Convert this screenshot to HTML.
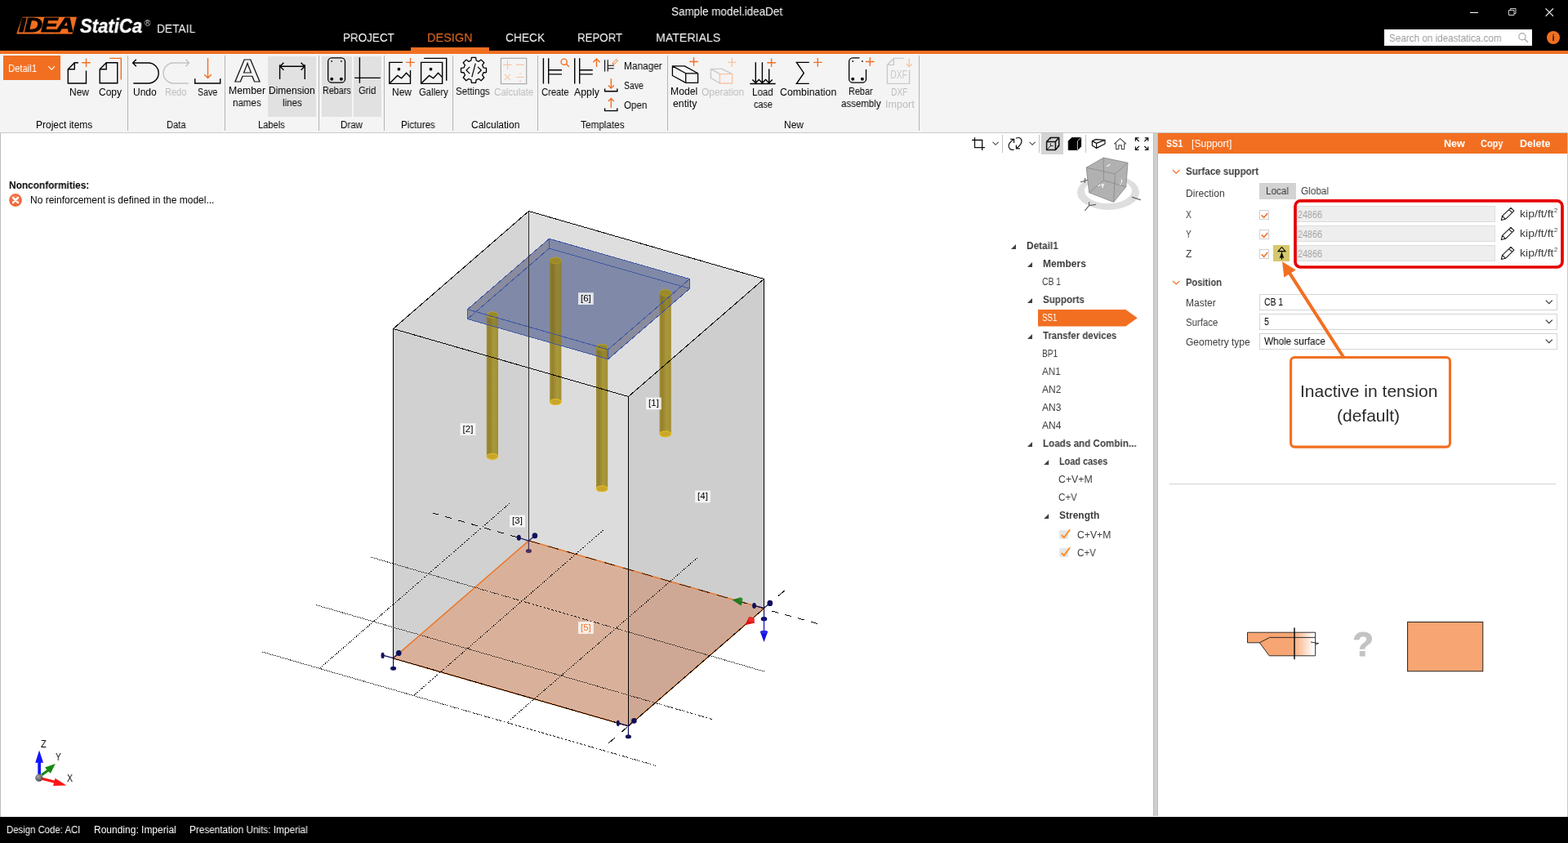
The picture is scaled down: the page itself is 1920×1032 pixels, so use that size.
<!DOCTYPE html>
<html lang="en">
<head>
<meta charset="utf-8">
<title>IDEA StatiCa Detail - Sample model.ideaDet</title>
<style>
html,body{margin:0;padding:0;background:#fff;}
body{width:1920px;height:1032px;overflow:hidden;position:relative;font-family:"Liberation Sans",sans-serif;font-size:12px;color:#000;}
#app{position:absolute;left:0;top:0;width:1920px;height:1032px;overflow:hidden;background:#fff;}
.a{position:absolute;}
.t{will-change:transform;position:absolute;white-space:pre;line-height:1;transform-origin:0 50%;}
svg{position:absolute;overflow:visible;will-change:transform;}
#titlebar{left:0;top:0;width:1920px;height:62px;background:#000;}
#oline{left:0;top:62px;width:1920px;height:4px;background:#f26f21;}
#ribbon{left:0;top:66px;width:1920px;height:96px;background:#f4f4f4;}
#ribbonb{left:0;top:162px;width:1920px;height:1px;background:#c9c9c9;}
#view{left:0;top:163px;width:1412px;height:837px;background:#fff;}
#viewl{left:0;top:163px;width:1px;height:837px;background:#bdbdbd;}
#split{left:1412px;top:163px;width:4px;height:836px;background:#cfcfcf;border-left:1px solid #bcbcbc;border-right:1px solid #bcbcbc;}
#panel{left:1418px;top:163px;width:502px;height:837px;background:#fff;}
#phead{left:1418px;top:163px;width:501px;height:25px;background:#f26f21;}
#status{left:0;top:1000px;width:1920px;height:32px;background:#000;}
.sep{position:absolute;width:1px;top:68px;height:92px;background:#b4b4b4;}
.hl{position:absolute;background:#e1e1e1;top:69px;height:74px;}
.dd{position:absolute;left:1542px;width:363px;height:18px;border:1px solid #d4d4d4;background:#fff;box-sizing:content-box;}
.inp{position:absolute;left:1588px;width:241px;height:18px;border:1px solid #dcdcdc;background:#eeeeee;}
.cb{position:absolute;left:1542px;width:10px;height:10px;border:1px solid #d0d0d0;background:#fff;}
</style>
</head>
<body>
<div id="app">
<div class="a" id="titlebar"></div>
<div class="a" id="oline"></div>
<div class="a" id="ribbon"></div>
<div class="a" id="ribbonb"></div>
<div class="a" id="view"></div>
<div class="a" id="viewl"></div>
<div class="a" id="split"></div>
<div class="a" id="panel"></div>
<div class="a" id="phead"></div>
<div class="a" id="status"></div>
<svg width="80" height="24" viewBox="18 19 80 24" style="left:18px;top:19px">
<polygon points="27.6,21 93.6,21 88.4,41.2 20.6,41.2" fill="#f26f21" stroke="#f26f21" stroke-width="0.6" stroke-linejoin="round"/>
</svg>
<div class="a" style="left:1695px;top:36px;width:181px;height:20px;background:#fff;"></div>
<svg width="240" height="62" viewBox="1680 0 240 62" style="left:1680px;top:0" fill="none" stroke="#fff" stroke-width="1">
<path d="M1800,15.5 H1810"/>
<path d="M1847.5,12.5 H1854 V18.5 H1847.5 Z M1849.5,12.5 V10.5 H1856 V16.5 H1854" stroke="#d0d0d0"/>
<path d="M1892.6,10.4 L1902,19.8 M1902,10.4 L1892.6,19.8" stroke-width="1.1"/>
<circle cx="1863.9" cy="44.7" r="4.1" stroke="#a6a6a6" stroke-width="1.2"/>
<path d="M1866.9,47.8 L1870.8,51.7" stroke="#a6a6a6" stroke-width="1.3"/>
<circle cx="1902" cy="46" r="8" fill="#f26f21" stroke="none"/>
<text x="1902" y="50.2" font-family="Liberation Sans, sans-serif" font-weight="700" font-size="11.5" text-anchor="middle" fill="#222" stroke="none">i</text>
</svg>
<svg id="model" width="1412" height="835" viewBox="0 163 1412 835" style="left:0;top:163px">
<defs>
<linearGradient id="ga" x1="0" x2="1" y1="0" y2="0"><stop offset="0" stop-color="#a38f36"/><stop offset="0.22" stop-color="#95812d"/><stop offset="0.62" stop-color="#aa983a"/><stop offset="1" stop-color="#a18e35"/></linearGradient>
<linearGradient id="gb" x1="0" x2="1" y1="0" y2="0"><stop offset="0" stop-color="#85772c"/><stop offset="0.5" stop-color="#98862f"/><stop offset="1" stop-color="#8b7b2c"/></linearGradient>
</defs>
<polygon points="481.5,402.5 647.5,258.5 647.5,450.3" fill="#d5d5d5"/>
<polygon points="647.5,258.5 935.5,341.5 769.5,485.5 647.5,450.3" fill="#dedede"/>
<polygon points="481.5,402.5 647.5,450.3 647.5,661.9 481.5,805.9" fill="#d1d1d1"/>
<polygon points="647.5,450.3 769.5,485.5 769.5,697.1 647.5,661.9" fill="#dcdcdc"/>
<polygon points="769.5,485.5 935.5,341.5 935.5,744.9 769.5,697.1" fill="#cecece"/>
<polygon points="481.5,805.9 647.5,661.9 769.5,697.1 769.5,888.9" fill="#d9b19b"/>
<polygon points="769.5,697.1 935.5,744.9 769.5,888.9" fill="#cfa895"/>
<g stroke="#000" stroke-width="1" stroke-dasharray="1.04 1.04" fill="none" shape-rendering="crispEdges">
<line x1="453.8" y1="682.0" x2="937.1" y2="822.4" />
<line x1="386.9" y1="740.6" x2="872.2" y2="880.6" />
<line x1="320.8" y1="798.0" x2="804.2" y2="937.6" />
</g>
<g stroke="#000" stroke-width="1" stroke-dasharray="1.32 1.32" fill="none" shape-rendering="crispEdges">
<line x1="624.3" y1="616.0" x2="391.5" y2="818.1" />
<line x1="738.4" y1="649.2" x2="507.1" y2="851.0" />
<line x1="854.0" y1="682.8" x2="622.0" y2="883.5" />
</g>
<g stroke="#000" stroke-width="1" stroke-dasharray="8 8.6" fill="none" shape-rendering="crispEdges">
<line x1="529.5" y1="627.9" x2="640.0" y2="659.7" />
<line x1="945.0" y1="748.0" x2="1001.5" y2="763.6" />
</g>
<g stroke="#000" stroke-width="1" fill="none" shape-rendering="crispEdges">
<line x1="952.8" y1="729.7" x2="960.6" y2="723.2" />
<line x1="761.3" y1="896.0" x2="767.6" y2="890.4" />
<line x1="745.4" y1="909.7" x2="752.7" y2="903.3" />
</g>
<g stroke="#ec7629" stroke-width="1.5" fill="none">
<polygon points="481.5,805.9 647.5,661.9 935.5,744.9 769.5,888.9"/>
</g>
<polygon points="572.5,378.7 672.5,292.3 844.6,341.5 844.6,353.3 744.6,439.7 572.5,390.5" fill="#8089a7"/>
<polygon points="744.6,427.9 844.6,341.5 844.6,353.3 744.6,439.7" fill="#8a8b9d"/>
<polygon points="572.5,378.7 672.5,292.3 672.5,304.1 572.5,390.5" fill="#8a8b9d"/>
<path d="M595.8,385.7 L595.8,558.7 A7.1,3.9 0 0 0 610.0,558.7 L610.0,385.7 Z" fill="url(#ga)"/>
<ellipse cx="602.9" cy="558.7" rx="6.8" ry="3.5" fill="#c8a62c" stroke="#e4bc1c" stroke-width="1.1"/>
<ellipse cx="602.9" cy="385.7" rx="6.9" ry="3.9" fill="#b09c2c" stroke="#c8ae2a" stroke-width="0.9"/>
<path d="M673.2,319.0 L673.2,492.0 A7.1,3.9 0 0 0 687.4,492.0 L687.4,319.0 Z" fill="url(#ga)"/>
<ellipse cx="680.3" cy="492.0" rx="6.8" ry="3.5" fill="#c8a62c" stroke="#e4bc1c" stroke-width="1.1"/>
<ellipse cx="680.3" cy="319.0" rx="6.9" ry="3.9" fill="#b09c2c" stroke="#c8ae2a" stroke-width="0.9"/>
<path d="M730.0,425.2 L730.0,598.2 A7.1,3.9 0 0 0 744.2,598.2 L744.2,425.2 Z" fill="url(#ga)"/>
<ellipse cx="737.1" cy="598.2" rx="6.8" ry="3.5" fill="#c8a62c" stroke="#e4bc1c" stroke-width="1.1"/>
<ellipse cx="737.1" cy="425.2" rx="6.9" ry="3.9" fill="#b09c2c" stroke="#c8ae2a" stroke-width="0.9"/>
<path d="M807.6,358.3 L807.6,531.3 A7.1,3.9 0 0 0 821.8,531.3 L821.8,358.3 Z" fill="url(#ga)"/>
<ellipse cx="814.7" cy="531.3" rx="6.8" ry="3.5" fill="#c8a62c" stroke="#e4bc1c" stroke-width="1.1"/>
<ellipse cx="814.7" cy="358.3" rx="6.9" ry="3.9" fill="#b09c2c" stroke="#c8ae2a" stroke-width="0.9"/>
<clipPath id="cp"><polygon points="572.5,378.7 672.5,292.3 844.6,341.5 844.6,353.3 744.6,439.7 572.5,390.5"/></clipPath>
<g clip-path="url(#cp)" fill="#2a2a22" fill-opacity="0.16">
<path d="M595.8,385.7 A7.1,3.9 0 0 1 610.0,385.7 L610.0,525.7 L595.8,525.7 Z"/>
<path d="M673.2,319.0 A7.1,3.9 0 0 1 687.4,319.0 L687.4,459.0 L673.2,459.0 Z"/>
<path d="M730.0,425.2 A7.1,3.9 0 0 1 744.2,425.2 L744.2,565.2 L730.0,565.2 Z"/>
<path d="M807.6,358.3 A7.1,3.9 0 0 1 821.8,358.3 L821.8,498.3 L807.6,498.3 Z"/>
</g>
<g stroke="#3f58a4" stroke-width="1" fill="none" stroke-linejoin="round" shape-rendering="crispEdges">
<polygon points="672.5,292.3 844.6,341.5 744.6,427.9 572.5,378.7"/>
<polygon points="672.5,304.1 844.6,353.3 744.6,439.7 572.5,390.5"/>
<line x1="672.5" y1="292.3" x2="672.5" y2="304.1"/>
<line x1="844.6" y1="341.5" x2="844.6" y2="353.3"/>
<line x1="744.6" y1="427.9" x2="744.6" y2="439.7"/>
<line x1="572.5" y1="378.7" x2="572.5" y2="390.5"/>
</g>
<g stroke="#000" stroke-width="1" fill="none" stroke-linejoin="round" shape-rendering="crispEdges">
<polygon points="647.5,258.5 935.5,341.5 769.5,485.5 481.5,402.5"/>
<line x1="935.5" y1="341.5" x2="935.5" y2="744.9" />
<line x1="769.5" y1="485.5" x2="769.5" y2="888.9" />
<line x1="481.5" y1="402.5" x2="481.5" y2="805.9" />
<line x1="647.5" y1="258.5" x2="647.5" y2="661.9" stroke="#2b2b2b"/>
<line x1="481.5" y1="805.9" x2="769.5" y2="888.9" />
<line x1="769.5" y1="888.9" x2="935.5" y2="744.9" />
<line x1="647.5" y1="661.9" x2="935.5" y2="744.9" stroke-dasharray="14 10" stroke-opacity="0.75"/>
</g>
<rect x="708.0" y="358.2" width="18.8" height="14.8" fill="#ffffff" fill-opacity="0.78"/>
<text x="717.4" y="368.9" font-family="Liberation Sans, sans-serif" font-size="11.5" text-anchor="middle" fill="#000">[6]</text>
<rect x="791.1" y="486.6" width="18.8" height="14.8" fill="#ffffff" fill-opacity="0.78"/>
<text x="800.5" y="497.3" font-family="Liberation Sans, sans-serif" font-size="11.5" text-anchor="middle" fill="#000">[1]</text>
<rect x="563.6" y="518.1" width="18.8" height="14.8" fill="#ffffff" fill-opacity="0.78"/>
<text x="573.0" y="528.8" font-family="Liberation Sans, sans-serif" font-size="11.5" text-anchor="middle" fill="#000">[2]</text>
<rect x="851.1" y="600.6" width="18.8" height="14.8" fill="#ffffff" fill-opacity="0.78"/>
<text x="860.5" y="611.3" font-family="Liberation Sans, sans-serif" font-size="11.5" text-anchor="middle" fill="#000">[4]</text>
<rect x="624.1" y="630.6" width="18.8" height="14.8" fill="#ffffff" fill-opacity="0.78"/>
<text x="633.5" y="641.3" font-family="Liberation Sans, sans-serif" font-size="11.5" text-anchor="middle" fill="#000">[3]</text>
<rect x="708.0" y="761.1" width="18.8" height="14.8" fill="#ffffff" fill-opacity="0.78"/>
<text x="717.4" y="771.8" font-family="Liberation Sans, sans-serif" font-size="11.5" text-anchor="middle" fill="#f07a33">[5]</text>
<g stroke="#10105c" stroke-width="1.2" fill="#10105c">
<line x1="647.4" y1="662.1" x2="635.3" y2="658.3"/><ellipse cx="635.3" cy="658.2" rx="1.9" ry="2.9"/>
<line x1="647.4" y1="662.1" x2="654.9" y2="655.8"/><ellipse cx="654.9" cy="655.8" rx="2.7" ry="2.9"/>
<line x1="647.4" y1="662.1" x2="647.4" y2="674.4" stroke="#4a3260"/><ellipse cx="647.4" cy="674.4" rx="3" ry="1.9" fill="#4a3260" stroke="#4a3260"/>
<line x1="481.6" y1="805.6" x2="468.6" y2="802.2"/><ellipse cx="468.6" cy="802.4" rx="1.5" ry="3"/>
<line x1="481.6" y1="805.6" x2="488.1" y2="799.5"/><ellipse cx="488.3" cy="799.5" rx="2.7" ry="2.9"/>
<line x1="481.6" y1="805.6" x2="481.6" y2="818.1"/><ellipse cx="481.6" cy="818.3" rx="3" ry="1.9"/>
<line x1="769.4" y1="888.6" x2="756.6" y2="885.3"/><ellipse cx="756.8" cy="885.3" rx="1.4" ry="3"/>
<line x1="769.4" y1="888.6" x2="776.2" y2="882.4"/><ellipse cx="776.4" cy="882.4" rx="2.7" ry="2.7"/>
<line x1="769.4" y1="888.6" x2="769.4" y2="901.8"/><ellipse cx="769.4" cy="901.8" rx="3" ry="1.9"/>
<line x1="935.5" y1="744.3" x2="923.5" y2="741.3"/><ellipse cx="923.5" cy="741.5" rx="1.8" ry="2.9"/>
<line x1="935.5" y1="744.3" x2="942.6" y2="738.5"/><ellipse cx="942.8" cy="738.4" rx="2.8" ry="3"/>
<line x1="935.5" y1="744.3" x2="935.5" y2="757.7"/><ellipse cx="935.5" cy="757.7" rx="3.2" ry="2"/>
</g>
<line x1="935.5" y1="757" x2="935.5" y2="774" stroke="#1515d8" stroke-width="1.3"/>
<path d="M930.9,773.5 Q935.5,770.5 940.1,773.5 L935.5,786 Z" fill="#1414e0"/>
<ellipse cx="935.5" cy="773.6" rx="4.6" ry="1.8" fill="#2a2af0"/>
<path d="M896.5,734.2 L907.5,731.2 Q910.2,736 907.3,741.6 Z" fill="#1f7a1f"/>
<path d="M905,731.6 L909.5,732.8 L909,736.2 L905.5,736 Z" fill="#2c8a2c"/>
<path d="M912.3,765.2 L917.2,755.3 Q922.6,755.6 924.3,762.6 Z" fill="#e01010"/>
<ellipse cx="920.3" cy="758.7" rx="3.6" ry="3.1" fill="#f02a2a" transform="rotate(25 920.3 758.7)"/>
</svg>
<div class="a" style="left:4px;top:68px;width:70px;height:30px;background:#f26f21;"></div>
<div class="hl" style="left:328px;width:59px;"></div>
<div class="hl" style="left:394px;width:37px;"></div>
<div class="hl" style="left:433px;width:34px;"></div>
<div class="sep" style="left:156px;"></div>
<div class="sep" style="left:275px;"></div>
<div class="sep" style="left:390px;"></div>
<div class="sep" style="left:470px;"></div>
<div class="sep" style="left:554px;"></div>
<div class="sep" style="left:658px;"></div>
<div class="sep" style="left:817px;"></div>
<div class="sep" style="left:1125px;"></div>
<div class="a" style="left:503px;top:58px;width:96px;height:4px;background:#f26f21;"></div>
<svg id="ricons" width="1920" height="170" viewBox="0 0 1920 170" style="left:0;top:0" fill="none" stroke="#000" stroke-width="1.4" stroke-linecap="butt" stroke-linejoin="miter">
<!-- Detail1 chevron -->
<path d="M59.3,81.2 L63.2,85.2 L67.1,81.2" stroke="#fff" stroke-width="1.1"/>
<!-- New -->
<path d="M96,76.7 L91.3,76.7 L83.3,84.7 L83.3,102 L105.5,102 L105.5,86.5 M91.3,76.7 L91.3,84.7 L83.3,84.7"/>
<path d="M100.3,76.7 H110.8 M105.5,71.4 V82" stroke="#f26f21"/>
<!-- Copy -->
<path d="M130.2,76.7 L122.2,84.7 L122.2,101.7 L143.8,101.7 L143.8,76.7 Z M130.2,76.7 L130.2,84.7 L122.2,84.7"/>
<path d="M134.2,71.4 H148.3 V97.5" stroke="#f26f21"/>
<!-- Undo -->
<path d="M166.8,72.8 L162.6,77 L166.8,81.2 M162.6,77 H181.7 A12.5,12.5 0 0 1 181.7,102 H163.3"/>
<!-- Redo -->
<path d="M227.4,72.8 L231.6,77 L227.4,81.2 M231.6,77 H212.5 A12.5,12.5 0 0 0 212.5,102 H230.8" stroke="#c3c3c3"/>
<!-- Save -->
<path d="M254.5,71.3 V95.3 M250.2,91.2 L254.5,95.4 L258.8,91.2" stroke="#f26f21"/>
<path d="M238.7,96.2 V102 H269.7 V96.2"/>
<!-- Member names: outlined A -->
<text x="303" y="99.6" font-family="Liberation Sans, sans-serif" font-weight="700" font-size="38" text-anchor="middle" stroke="#111" stroke-width="1.1" fill="none" textLength="32.5" lengthAdjust="spacingAndGlyphs">A</text>
<!-- Dimension lines -->
<path d="M342.6,79.2 V97 M373.3,79.2 V97 M342.8,81.3 H373.2 M347.4,76.8 L342.9,81.3 L347.4,85.8 M368.6,76.8 L373.1,81.3 L368.6,85.8"/>
<!-- Rebars -->
<rect x="401.7" y="70.8" width="20.8" height="30.4" rx="4.5" ry="4.5" stroke-width="1.3"/>
<circle cx="406.2" cy="75" r="0.9" fill="#111" stroke="none"/><circle cx="417.9" cy="75" r="0.9" fill="#111" stroke="none"/>
<circle cx="406.2" cy="96.8" r="2" fill="#111" stroke="none"/><circle cx="417.9" cy="96.8" r="2" fill="#111" stroke="none"/>
<!-- Grid -->
<path d="M440.4,70.3 V101.7 M434.2,95.4 H465.8"/>
<!-- Pictures: New -->
<path d="M493,76.4 H476.8 V102.4 H502.5 V86 M477.4,101.8 L486.7,92.4 L491.6,95.8 L497.6,89.2 L502.5,94.6"/>
<circle cx="488.4" cy="84.7" r="1.9" fill="#111" stroke="none"/>
<path d="M497.2,76.4 H507.8 M502.5,71.1 V81.7" stroke="#f26f21"/>
<!-- Gallery -->
<path d="M515.6,76.4 H541.6 V102.4 H515.6 Z M516.2,101.8 L525.6,92.4 L530.6,95.8 L536.6,89.2 L541.5,94.6"/>
<circle cx="527.5" cy="84.7" r="1.9" fill="#111" stroke="none"/>
<path d="M519.2,71.4 H546.7 V98.7"/>
<!-- Settings gear -->
<path d="M576.9,74.0 L577.4,70.4 L582.6,70.4 L583.1,74.0 L586.2,75.3 L589.1,73.1 L592.8,76.8 L590.6,79.7 L591.9,82.8 L595.5,83.3 L595.5,88.5 L591.9,89.0 L590.6,92.1 L592.8,95.0 L589.1,98.7 L586.2,96.5 L583.1,97.8 L582.6,101.4 L577.4,101.4 L576.9,97.8 L573.8,96.5 L570.9,98.7 L567.2,95.0 L569.4,92.1 L568.1,89.0 L564.5,88.5 L564.5,83.3 L568.1,82.8 L569.4,79.7 L567.2,76.8 L570.9,73.1 L573.8,75.3 Z" stroke-width="1.3" stroke-linejoin="round"/>
<path d="M575.2,81.9 L571,86 L575.2,90.2 M582.2,77.6 L577.8,94.4 M585,81.9 L589.3,86 L585,90.2" stroke-width="1.2"/>
<!-- Calculate (disabled) -->
<rect x="613.4" y="71.3" width="31.3" height="31.3" stroke="#a9a9a9" stroke-width="1.2"/>
<g stroke="#f8c5a6" stroke-width="1.1">
<path d="M616.2,79.4 H626.8 M621.5,74.1 V84.7 M632.1,79.4 H641.9 M617.8,90.9 L625,98.1 M625,90.9 L617.8,98.1 M632.1,94.5 H641.9"/>
<circle cx="637" cy="90.1" r="0.9" fill="#f8c5a6" stroke="none"/><circle cx="637" cy="99" r="0.9" fill="#f8c5a6" stroke="none"/>
</g>
<!-- Create -->
<path d="M665.4,71.3 V102.5 M671.7,71.3 V102.5 M671.7,85.8 H688 M671.7,90.9 H688"/>
<circle cx="690.7" cy="75.7" r="3.6" stroke="#f26f21"/><path d="M693.3,78.3 L696.8,81.8" stroke="#f26f21"/>
<!-- Apply -->
<path d="M703.7,71.3 V102.5 M709.7,71.3 V102.5 M709.7,85.8 H725.8 M709.7,90.9 H725.8"/>
<path d="M730.5,82 V72 M726.4,76.2 L730.5,72 L734.6,76.2" stroke="#f26f21"/>
<!-- Manager -->
<path d="M740.6,73.3 V87.6 M744.2,73.3 V87.6 M744.2,80.3 H751.8 M744.2,83.7 H751.8" stroke-width="1.1"/>
<path d="M750.6,76.8 L754.6,72.6 L756.4,74.2 L752.5,78.3 L750.2,78.9 Z" stroke="#f26f21" stroke-width="1"/>
<!-- Save small -->
<path d="M748.3,96.3 V108 M744.8,104.6 L748.3,108.1 L751.8,104.6" stroke="#f26f21"/>
<path d="M740.6,108.5 V111.8 H755.8 V108.5"/>
<!-- Open small -->
<path d="M748.3,132 V120.4 M744.8,123.9 L748.3,120.4 L751.8,123.9" stroke="#f26f21"/>
<path d="M740.6,132.5 V135.6 H755.8 V132.5"/>
<!-- Model entity -->
<path d="M839.7,89.8 H854.6 V101.4 H839.7 Z M839.7,89.8 L823.4,80.9 H838.3 L854.6,89.8 M823.4,80.9 V92.5 L839.7,101.4" stroke-width="1.3" stroke-linejoin="round"/>
<path d="M844.2,75.5 H854.8 M849.5,70.2 V80.8" stroke="#f26f21"/>
<!-- Operation (disabled) -->
<path d="M870.4,84.4 H884 L896.6,90.6 M870.4,84.4 V95.4 L881.4,102 M870.4,84.4 L881.4,90.6" stroke="#c9c9c9" stroke-linejoin="round"/>
<path d="M881.4,90.6 H896.6 V102 H881.4 Z" stroke="#f8c5a6"/>
<path d="M891,76.4 H901.6 M896.3,71.1 V81.7" stroke="#f8c5a6"/>
<!-- Load case -->
<path d="M925.3,76.3 V101.6 M933.4,76.3 V101.6 M941.7,84.6 V101.6 M921.3,97.5 L925.3,101.6 L929.3,97.5 L933.4,101.6 L937.5,97.5 L941.7,101.6 L945.8,97.5 M918.3,102.5 H949.7"/>
<path d="M939.3,76.7 H949.9 M944.6,71.4 V82" stroke="#f26f21"/>
<!-- Combination -->
<path d="M990.8,76.4 H975.4 L984.3,89.4 L975.4,102.4 H990.8" stroke-linejoin="miter"/>
<path d="M996,76.4 H1006.6 M1001.3,71.1 V81.7" stroke="#f26f21"/>
<!-- Rebar assembly -->
<path d="M1052.5,70.8 H1044.2 A4.5,4.5 0 0 0 1039.7,75.3 V96.7 A4.5,4.5 0 0 0 1044.2,101.2 H1056 A4.5,4.5 0 0 0 1060.5,96.7 V85" stroke-width="1.3"/>
<circle cx="1044.2" cy="75" r="0.9" fill="#111" stroke="none"/><circle cx="1055.9" cy="75" r="0.9" fill="#111" stroke="none"/>
<circle cx="1044.2" cy="96.8" r="2" fill="#111" stroke="none"/><circle cx="1055.9" cy="96.8" r="2" fill="#111" stroke="none"/>
<path d="M1060,75.5 H1070.6 M1065.3,70.2 V80.8" stroke="#f26f21"/>
<!-- DXF import (disabled) -->
<path d="M1107,71.4 H1094.4 L1086.4,79.4 V102.4 H1113.6 V85.5 M1094.4,71.4 V79.4 H1086.4" stroke="#c9c9c9"/>
<path d="M1113.3,71.4 V81.6 M1109.6,78 L1113.3,81.7 L1117,78" stroke="#f8c5a6"/>
<text x="1100.6" y="95.8" font-family="Liberation Sans, sans-serif" font-size="14.5" text-anchor="middle" fill="#c9c9c9" stroke="none" textLength="20.5" lengthAdjust="spacingAndGlyphs">DXF</text>
</svg>
<div class="a" style="left:1275px;top:163px;width:27px;height:26px;background:#d4d4d4;"></div>
<div class="a" style="left:1227px;top:165px;width:1px;height:22px;background:#c4c4c4;"></div>
<div class="a" style="left:1272px;top:165px;width:1px;height:22px;background:#c4c4c4;"></div>
<div class="a" style="left:1329px;top:165px;width:1px;height:22px;background:#c4c4c4;"></div>
<svg width="240" height="30" viewBox="1180 160 240 30" style="left:1180px;top:160px" fill="none" stroke="#111" stroke-width="1.2">
<path d="M1193.5,168.2 V180.6 H1206 M1190.2,171.5 H1202.7 V184" stroke-width="1.3"/>
<path d="M1215.6,173.8 L1219.1,177.3 L1222.6,173.8" stroke="#444" stroke-width="1.1"/>
<path d="M1241.6,183.1 C1237.6,184.3 1234.4,181.6 1235.2,177.6 C1235.9,174.6 1238.2,172.6 1241.2,170.7 M1237.2,170.4 H1241.6 V174.9 M1244.1,169.3 C1248.1,167.2 1251.6,169.6 1250.9,173.6 C1250.3,176.8 1247.6,179.4 1244.6,181.6 M1244.4,177.5 V181.9 H1248.9" stroke-width="1.2"/>
<path d="M1260.6,173.8 L1264.1,177.3 L1267.6,173.8" stroke="#444" stroke-width="1.1"/>
<path d="M1281.6,173.6 H1292.4 V183.6 H1281.6 Z M1281.6,173.6 L1286.2,168.4 H1296.7 V178.4 L1292.4,183.6 M1292.4,173.6 L1296.7,168.4" stroke-linejoin="round" stroke-width="1.5"/>
<path d="M1286.4,175.4 V178.6 H1289.6 M1286.4,178.6 L1281.8,183.4 M1286.4,168.6 V170.6 M1296.6,178.6 H1294.6" stroke-width="0.9"/>
<path d="M1308.2,172.6 L1312.6,168.6 H1323.7 V179.6 L1319.4,183.6 H1308.2 Z" fill="#000" stroke="#000" stroke-width="0.8" stroke-linejoin="round"/>
<path d="M1319.4,172.6 V183.4 M1319.6,172.4 L1323.6,168.8" stroke="#fff" stroke-width="0.8"/>
<path d="M1337.4,172.6 L1342,170.6 L1353,171.4 V176 L1342.6,181.4 L1337.4,178 Z M1337.4,172.6 L1342.6,175.4 L1353,171.4 M1342.6,175.4 V181.4" stroke-linejoin="round"/>
<path d="M1364.6,176 L1371.6,169.6 L1378.6,176 H1376.6 V182.6 H1373.4 V177.8 H1369.8 V182.6 H1366.6 V176 Z" stroke="#555" stroke-width="1.2" stroke-linejoin="round"/>
<path d="M1390.4,172.8 V168.8 H1394.4 M1390.6,169 L1394.8,173.2 M1401.8,168.8 H1405.8 V172.8 M1405.6,169 L1401.4,173.2 M1390.4,179.4 V183.4 H1394.4 M1390.6,183.2 L1394.8,179 M1401.8,183.4 H1405.8 V179.4 M1405.6,183.2 L1401.4,179"/>
</svg>
<svg width="100" height="80" viewBox="1310 185 100 80" style="left:1310px;top:185px">
<path d="M1319,235.4 a38,21.5 0 1 0 76,0 a38,21.5 0 1 0 -76,0 Z M1328,233.6 a29,15.5 0 1 1 58,0 a29,15.5 0 1 1 -58,0 Z" fill="#dedede" fill-rule="evenodd"/>
<polygon points="1351.2,193.1 1381,199.3 1378.7,228.8 1363.6,247.4 1333.7,235.8 1330.2,205.2" fill="#b1b1b1" stroke="#8c8c8c" stroke-width="0.9" stroke-linejoin="round"/>
<g fill="none" stroke="#8c8c8c" stroke-width="0.9">
<path d="M1330.2,205.2 L1365.5,212.9 L1381,199.3 M1365.5,212.9 L1363.6,247.4 M1351.2,193.1 L1351.5,220.7 L1333.7,235.8 M1351.5,220.7 L1378.7,228.8"/>
</g>
<g stroke="#fff" stroke-width="1.1" fill="none" stroke-linecap="round">
<path d="M1355.6,203.4 L1359,201.6 M1345,227.5 L1347,226 M1349,225 L1350.3,229.5 M1351.6,225.4 L1350.3,227.6 M1373.3,220 L1373.6,223.4 M1371.6,225.6 L1372.2,225.2"/>
</g>
<g stroke="#666" stroke-width="1.2" fill="none">
<path d="M1328.6,257.6 L1333.6,251.6 L1333.6,247.6 M1333.6,251.6 L1341.6,250.4 M1323.4,222.8 L1331.4,220.4 M1328.6,218.4 L1328.2,223.6 M1386.4,241.4 L1396.4,244.6" stroke-linecap="round"/>
</g>
</svg>
<svg width="70" height="60" viewBox="30 910 70 60" style="left:30px;top:910px">
<defs><radialGradient id="gs" cx="0.4" cy="0.35" r="0.7"><stop offset="0" stop-color="#a8a8a8"/><stop offset="0.6" stop-color="#6c6c6c"/><stop offset="1" stop-color="#4a4a4a"/></radialGradient></defs>
<path d="M51.2,951.6 L66.6,955.4 L67.6,952.8 L81.4,961.4 L65.2,962 L65.9,958.6 L50.6,954.8 Z" fill="#ff1414"/>
<path d="M50,947.6 L57.4,942.2 L55,939.6 L67.8,935 L61.9,946.8 L59.4,944.6 L52,950 Z" fill="#128a12"/>
<path d="M46.3,950 V933.8 H43.2 L48.1,918.4 L53,933.8 H50 V950 Z" fill="#1414ff"/>
<circle cx="47.8" cy="952.2" r="4.6" fill="url(#gs)"/>
</svg>
<svg width="20" height="20" viewBox="9 235 20 20" style="left:9px;top:235px">
<defs><radialGradient id="ge" cx="0.5" cy="0.4" r="0.6"><stop offset="0" stop-color="#f9875a"/><stop offset="1" stop-color="#ee5e30"/></radialGradient></defs>
<circle cx="19" cy="245" r="7.9" fill="url(#ge)"/>
<path d="M15.9,241.9 L22.1,248.1 M22.1,241.9 L15.9,248.1" stroke="#fff" stroke-width="2.3" stroke-linecap="round"/>
</svg>
<svg width="160" height="400" viewBox="1236 290 160 400" style="left:1236px;top:290px">
<path d="M1271,379 H1378.4 L1392.8,389.3 L1378.4,399.6 H1271 Z" fill="#f26f21"/>
<g fill="#404040">
<path d="M1244,299 V305 H1238 Z"/>
<path d="M1264,321 V327 H1258 Z"/>
<path d="M1264,365 V371 H1258 Z"/>
<path d="M1264,409 V415 H1258 Z"/>
<path d="M1264,541 V547 H1258 Z"/>
<path d="M1284.2,563 V569 H1278.2 Z"/>
<path d="M1284.2,629 V635 H1278.2 Z"/>
</g>
<rect x="1297.1" y="649" width="11" height="11" rx="1.6" fill="#e6e6e6"/>
<rect x="1297.1" y="671" width="11" height="11" rx="1.6" fill="#e6e6e6"/>
<g fill="none" stroke="#ff8a1c" stroke-width="1.9" stroke-linejoin="miter">
<path d="M1299.8,655 L1302.9,658.1 L1310.2,648.3"/>
<path d="M1299.8,677 L1302.9,680.1 L1310.2,670.3"/>
</g>
</svg>
<div class="a" style="left:1542px;top:224px;width:45px;height:20px;background:#d3d3d3;"></div>
<div class="cb" style="top:257px;"></div>
<div class="cb" style="top:281px;"></div>
<div class="cb" style="top:305px;"></div>
<div class="inp" style="top:252px;"></div>
<div class="inp" style="top:276px;"></div>
<div class="inp" style="top:300px;"></div>
<div class="a" style="left:1559px;top:300px;width:20px;height:20px;background:#d6c86e;"></div>
<div class="dd" style="top:360px;"></div>
<div class="dd" style="top:384px;"></div>
<div class="dd" style="top:408px;"></div>
<div class="a" style="left:1432px;top:592px;width:473px;height:1px;background:#d2d2d2;"></div>
<div class="a" style="left:1919px;top:163px;width:1px;height:837px;background:#c8c8c8;"></div>
<svg width="502" height="440" viewBox="1418 190 502 440" style="left:1418px;top:190px" fill="none">
<g stroke="#f26f21" stroke-width="1.2">
<path d="M1436,208 L1440.2,212.2 L1444.4,208"/>
<path d="M1436,343.8 L1440.2,348 L1444.4,343.8"/>
<path d="M1544.7,263.4 L1547.7,266.3 L1552.2,261" stroke-width="1.5"/>
<path d="M1544.7,287.4 L1547.7,290.3 L1552.2,285" stroke-width="1.5"/>
<path d="M1544.7,311.4 L1547.7,314.3 L1552.2,309" stroke-width="1.5"/>
</g>
<g stroke="#000" stroke-width="1.1">
<path d="M1565.1,307.6 L1569.5,302.5 L1574,307.6 Z"/>
<path d="M1569.5,308.4 V317.8"/>
<path d="M1567.3,315.8 L1569.5,309.8 L1571.7,315.8 L1569.5,314.2 Z" fill="#000" stroke-width="0.8"/>
</g>
<g stroke="#1a1a1a" stroke-width="1.1" stroke-linejoin="round">
<path d="M1838.3,269.5 L1839.6,264.4 L1850,254.4 L1853.9,258.2 L1843.5,268.3 Z M1839.6,264.4 L1843.5,268.3 M1847.7,256.6 L1851.6,260.4"/>
<path d="M1838.3,269.5 L1839.6,264.4 L1850,254.4 L1853.9,258.2 L1843.5,268.3 Z M1839.6,264.4 L1843.5,268.3 M1847.7,256.6 L1851.6,260.4" transform="translate(0 24)"/>
<path d="M1838.3,269.5 L1839.6,264.4 L1850,254.4 L1853.9,258.2 L1843.5,268.3 Z M1839.6,264.4 L1843.5,268.3 M1847.7,256.6 L1851.6,260.4" transform="translate(0 48)"/>
</g>
<g stroke="#333" stroke-width="1.1">
<path d="M1892.8,367.6 L1896.8,371.6 L1900.8,367.6"/>
<path d="M1892.8,391.6 L1896.8,395.6 L1900.8,391.6"/>
<path d="M1892.8,415.6 L1896.8,419.6 L1900.8,415.6"/>
</g>
</svg>
<svg width="340" height="320" viewBox="1580 240 340 320" style="left:1580px;top:240px" fill="none">
<rect x="1586" y="245.9" width="327" height="81.1" rx="6.5" ry="6.5" stroke="#e60000" stroke-width="3.7"/>
</svg>
<svg width="230" height="240" viewBox="1560 315 230 240" style="left:1560px;top:315px" fill="none">
<path d="M1645.6,438 L1578.8,333.8" stroke="#f26f21" stroke-width="4"/>
<path d="M1570.1,320.2 L1586.8,330.4 L1572.3,339.5 Z" fill="#f26f21"/>
<rect x="1580.6" y="437.5" width="194.9" height="109.6" rx="4.5" ry="4.5" fill="#fff" stroke="#f26f21" stroke-width="3.1"/>
</svg>
<svg width="320" height="80" viewBox="1510 750 320 80" style="left:1510px;top:750px">
<defs><linearGradient id="gbm" gradientUnits="userSpaceOnUse" x1="1527.5" x2="1610.6" y1="0" y2="0"><stop offset="0" stop-color="#f7a572"/><stop offset="0.66" stop-color="#f7a572"/><stop offset="0.98" stop-color="#fff"/></linearGradient></defs>
<path d="M1527.5,774.2 H1610.6 V802.8 H1554.2 L1542.4,786.8 H1527.5 Z" fill="url(#gbm)" stroke="none"/>
<path d="M1527.5,774.2 H1610.6 V802.8 H1554.2 L1542.4,786.8 H1527.5 Z" fill="none" stroke="#1a1a1a" stroke-width="0.9"/>
<path d="M1542.4,786.8 L1554.6,780.4 H1610.6 M1605,786 L1614.6,787.6 L1610.8,788.8" fill="none" stroke="#1a1a1a" stroke-width="0.9"/>
<path d="M1585,768.4 V807.2" stroke="#000" stroke-width="1.4"/>
<rect x="1723.6" y="761.4" width="92.2" height="60.4" fill="#f7a572" stroke="#111" stroke-width="0.9"/>
<text x="1669.2" y="803.2" font-family="Liberation Sans, sans-serif" font-weight="700" font-size="42" text-anchor="middle" fill="#c3c3c3" stroke="#c3c3c3" stroke-width="0.9">?</text>
</svg>
<span class="t" style="left:822.4px;top:8px;font-size:13.8px;color:#ffffff;transform:scaleX(0.975);">Sample model.ideaDet</span>
<span class="t" style="left:419.6px;top:38px;font-size:15.5px;color:#ffffff;transform:scaleX(0.869);">PROJECT</span>
<span class="t" style="left:522.7px;top:38px;font-size:15.5px;color:#f26f21;transform:scaleX(0.935);">DESIGN</span>
<span class="t" style="left:618.6px;top:38px;font-size:15.5px;color:#ffffff;transform:scaleX(0.886);">CHECK</span>
<span class="t" style="left:707.1px;top:38px;font-size:15.5px;color:#ffffff;transform:scaleX(0.857);">REPORT</span>
<span class="t" style="left:802.7px;top:38px;font-size:15.5px;color:#ffffff;transform:scaleX(0.915);">MATERIALS</span>
<span class="t" style="left:1700.7px;top:41px;font-size:12.6px;color:#9b9b9b;transform:scaleX(0.927);">Search on ideastatica.com</span>
<span class="t" style="left:192.4px;top:28px;font-size:14.6px;color:#ffffff;transform:scaleX(0.943);">DETAIL</span>
<span class="t" style="left:97.5px;top:21px;font-size:23.2px;color:#ffffff;font-weight:700;font-style:italic;-webkit-text-stroke:0.35px #fff;transform:scaleX(0.953);">StatiCa</span>
<span class="t" style="left:22.6px;top:20px;font-size:23px;color:#000000;font-weight:700;font-style:italic;letter-spacing:-1.1px;-webkit-text-stroke:1.1px #000;transform:scaleX(1.313);">IDEA</span>
<span class="t" style="left:176.5px;top:24px;font-size:10px;color:#d8d8d8;">®</span>
<span class="t" style="left:9.8px;top:78px;font-size:12px;color:#ffffff;transform:scaleX(0.937);">Detail1</span>
<span class="t" style="left:85.0px;top:107px;font-size:12px;color:#000000;transform:scaleX(0.991);">New</span>
<span class="t" style="left:121.0px;top:107px;font-size:12px;color:#000000;transform:scaleX(0.985);">Copy</span>
<span class="t" style="left:162.8px;top:107px;font-size:12px;color:#000000;">Undo</span>
<span class="t" style="left:201.8px;top:107px;font-size:12px;color:#bdbdbd;transform:scaleX(0.917);">Redo</span>
<span class="t" style="left:241.7px;top:107px;font-size:12px;color:#000000;transform:scaleX(0.881);">Save</span>
<span class="t" style="left:43.7px;top:147px;font-size:12px;color:#000000;">Project items</span>
<span class="t" style="left:203.8px;top:147px;font-size:12px;color:#000000;transform:scaleX(0.927);">Data</span>
<span class="t" style="left:279.8px;top:105px;font-size:12px;color:#000000;transform:scaleX(1.022);">Member</span>
<span class="t" style="left:285.0px;top:120px;font-size:12px;color:#000000;transform:scaleX(0.966);">names</span>
<span class="t" style="left:329.0px;top:105px;font-size:12px;color:#000000;transform:scaleX(0.993);">Dimension</span>
<span class="t" style="left:345.8px;top:120px;font-size:12px;color:#000000;transform:scaleX(0.960);">lines</span>
<span class="t" style="left:394.8px;top:105px;font-size:12px;color:#000000;transform:scaleX(0.897);">Rebars</span>
<span class="t" style="left:438.8px;top:105px;font-size:12px;color:#000000;transform:scaleX(0.940);">Grid</span>
<span class="t" style="left:479.8px;top:107px;font-size:12px;color:#000000;transform:scaleX(0.991);">New</span>
<span class="t" style="left:512.8px;top:107px;font-size:12px;color:#000000;transform:scaleX(0.939);">Gallery</span>
<span class="t" style="left:315.8px;top:147px;font-size:12px;color:#000000;transform:scaleX(0.927);">Labels</span>
<span class="t" style="left:416.8px;top:147px;font-size:12px;color:#000000;transform:scaleX(0.964);">Draw</span>
<span class="t" style="left:490.8px;top:147px;font-size:12px;color:#000000;transform:scaleX(0.964);">Pictures</span>
<span class="t" style="left:557.8px;top:106px;font-size:12px;color:#000000;transform:scaleX(0.962);">Settings</span>
<span class="t" style="left:604.5px;top:107px;font-size:12px;color:#bdbdbd;transform:scaleX(0.965);">Calculate</span>
<span class="t" style="left:663.2px;top:107px;font-size:12px;color:#000000;transform:scaleX(0.933);">Create</span>
<span class="t" style="left:702.8px;top:107px;font-size:12px;color:#000000;transform:scaleX(1.026);">Apply</span>
<span class="t" style="left:764.0px;top:75px;font-size:12px;color:#000000;transform:scaleX(0.988);">Manager</span>
<span class="t" style="left:764.0px;top:99px;font-size:12px;color:#000000;transform:scaleX(0.870);">Save</span>
<span class="t" style="left:764.0px;top:123px;font-size:12px;color:#000000;transform:scaleX(0.964);">Open</span>
<span class="t" style="left:577.0px;top:147px;font-size:12px;color:#000000;">Calculation</span>
<span class="t" style="left:711.2px;top:147px;font-size:12px;color:#000000;transform:scaleX(0.980);">Templates</span>
<span class="t" style="left:821.2px;top:106px;font-size:12px;color:#000000;transform:scaleX(1.019);">Model</span>
<span class="t" style="left:824.2px;top:121px;font-size:12px;color:#000000;transform:scaleX(1.021);">entity</span>
<span class="t" style="left:859.2px;top:107px;font-size:12px;color:#bdbdbd;transform:scaleX(0.989);">Operation</span>
<span class="t" style="left:920.8px;top:107px;font-size:12px;color:#000000;transform:scaleX(0.963);">Load</span>
<span class="t" style="left:923.2px;top:122px;font-size:12px;color:#000000;transform:scaleX(0.899);">case</span>
<span class="t" style="left:955.0px;top:107px;font-size:12px;color:#000000;transform:scaleX(1.029);">Combination</span>
<span class="t" style="left:1039.0px;top:106px;font-size:12px;color:#000000;transform:scaleX(0.906);">Rebar</span>
<span class="t" style="left:1030.0px;top:121px;font-size:12px;color:#000000;transform:scaleX(0.959);">assembly</span>
<span class="t" style="left:1091.2px;top:107px;font-size:12px;color:#bdbdbd;transform:scaleX(0.846);">DXF</span>
<span class="t" style="left:1084.0px;top:122px;font-size:12px;color:#bdbdbd;transform:scaleX(1.053);">Import</span>
<span class="t" style="left:960.0px;top:147px;font-size:12px;color:#000000;transform:scaleX(0.991);">New</span>
<span class="t" style="left:11.0px;top:221px;font-size:12px;color:#000000;font-weight:700;transform:scaleX(0.989);">Nonconformities:</span>
<span class="t" style="left:37.0px;top:239px;font-size:12px;color:#000000;">No reinforcement is defined in the model...</span>
<span class="t" style="left:49.8px;top:905px;font-size:12px;color:#000000;transform:scaleX(0.913);">Z</span>
<span class="t" style="left:67.6px;top:921px;font-size:12px;color:#000000;transform:scaleX(0.849);">Y</span>
<span class="t" style="left:81.8px;top:947px;font-size:12px;color:#000000;transform:scaleX(0.886);">X</span>
<span class="t" style="left:7.8px;top:1010px;font-size:12px;color:#ffffff;transform:scaleX(0.947);">Design Code: ACI</span>
<span class="t" style="left:114.7px;top:1010px;font-size:12px;color:#ffffff;">Rounding: Imperial</span>
<span class="t" style="left:231.8px;top:1010px;font-size:12px;color:#ffffff;transform:scaleX(0.982);">Presentation Units: Imperial</span>
<span class="t" style="left:1257.0px;top:295px;font-size:12px;color:#3c3c3c;font-weight:700;transform:scaleX(0.986);">Detail1</span>
<span class="t" style="left:1276.9px;top:317px;font-size:12px;color:#3c3c3c;font-weight:700;transform:scaleX(1.004);">Members</span>
<span class="t" style="left:1275.9px;top:339px;font-size:12px;color:#3c3c3c;transform:scaleX(0.858);">CB 1</span>
<span class="t" style="left:1276.9px;top:361px;font-size:12px;color:#3c3c3c;font-weight:700;transform:scaleX(0.966);">Supports</span>
<span class="t" style="left:1275.5px;top:383px;font-size:12px;color:#ffffff;transform:scaleX(0.807);">SS1</span>
<span class="t" style="left:1276.9px;top:405px;font-size:12px;color:#3c3c3c;font-weight:700;transform:scaleX(0.953);">Transfer devices</span>
<span class="t" style="left:1275.6px;top:427px;font-size:12px;color:#3c3c3c;transform:scaleX(0.842);">BP1</span>
<span class="t" style="left:1275.6px;top:449px;font-size:12px;color:#3c3c3c;transform:scaleX(0.968);">AN1</span>
<span class="t" style="left:1275.6px;top:471px;font-size:12px;color:#3c3c3c;transform:scaleX(0.994);">AN2</span>
<span class="t" style="left:1275.6px;top:493px;font-size:12px;color:#3c3c3c;transform:scaleX(0.994);">AN3</span>
<span class="t" style="left:1275.6px;top:515px;font-size:12px;color:#3c3c3c;transform:scaleX(0.994);">AN4</span>
<span class="t" style="left:1276.7px;top:537px;font-size:12px;color:#3c3c3c;font-weight:700;transform:scaleX(0.971);">Loads and Combin...</span>
<span class="t" style="left:1297.1px;top:559px;font-size:12px;color:#3c3c3c;font-weight:700;transform:scaleX(0.906);">Load cases</span>
<span class="t" style="left:1295.7px;top:581px;font-size:12px;color:#3c3c3c;transform:scaleX(1.027);">C+V+M</span>
<span class="t" style="left:1295.7px;top:603px;font-size:12px;color:#3c3c3c;transform:scaleX(0.963);">C+V</span>
<span class="t" style="left:1296.5px;top:625px;font-size:12px;color:#3c3c3c;font-weight:700;transform:scaleX(0.991);">Strength</span>
<span class="t" style="left:1318.8px;top:649px;font-size:12px;color:#3c3c3c;transform:scaleX(1.015);">C+V+M</span>
<span class="t" style="left:1318.8px;top:671px;font-size:12px;color:#3c3c3c;transform:scaleX(0.963);">C+V</span>
<span class="t" style="left:1427.5px;top:170px;font-size:12px;color:#ffffff;font-weight:700;transform:scaleX(0.895);">SS1</span>
<span class="t" style="left:1458.9px;top:170px;font-size:12px;color:#ffffff;transform:scaleX(1.014);">[Support]</span>
<span class="t" style="left:1767.5px;top:170px;font-size:12px;color:#ffffff;font-weight:700;transform:scaleX(1.045);">New</span>
<span class="t" style="left:1813.1px;top:170px;font-size:12px;color:#ffffff;font-weight:700;transform:scaleX(0.913);">Copy</span>
<span class="t" style="left:1860.8px;top:170px;font-size:12px;color:#ffffff;font-weight:700;transform:scaleX(1.041);">Delete</span>
<span class="t" style="left:1451.5px;top:204px;font-size:12px;color:#3c3c3c;font-weight:700;transform:scaleX(0.968);">Surface support</span>
<span class="t" style="left:1451.5px;top:231px;font-size:12px;color:#3c3c3c;transform:scaleX(1.009);">Direction</span>
<span class="t" style="left:1549.8px;top:228px;font-size:12px;color:#3c3c3c;transform:scaleX(0.976);">Local</span>
<span class="t" style="left:1592.5px;top:228px;font-size:12px;color:#3c3c3c;transform:scaleX(0.980);">Global</span>
<span class="t" style="left:1451.5px;top:257px;font-size:12px;color:#3c3c3c;transform:scaleX(0.861);">X</span>
<span class="t" style="left:1451.5px;top:281px;font-size:12px;color:#3c3c3c;transform:scaleX(0.836);">Y</span>
<span class="t" style="left:1451.5px;top:305px;font-size:12px;color:#3c3c3c;transform:scaleX(0.940);">Z</span>
<span class="t" style="left:1588.5px;top:257px;font-size:12px;color:#a3a3a3;transform:scaleX(0.896);">24866</span>
<span class="t" style="left:1588.5px;top:281px;font-size:12px;color:#a3a3a3;transform:scaleX(0.896);">24866</span>
<span class="t" style="left:1588.5px;top:305px;font-size:12px;color:#a3a3a3;transform:scaleX(0.896);">24866</span>
<span class="t" style="left:1451.5px;top:340px;font-size:12px;color:#3c3c3c;font-weight:700;transform:scaleX(0.929);">Position</span>
<span class="t" style="left:1451.5px;top:365px;font-size:12px;color:#3c3c3c;transform:scaleX(0.987);">Master</span>
<span class="t" style="left:1547.9px;top:364px;font-size:12px;color:#000000;transform:scaleX(0.862);">CB 1</span>
<span class="t" style="left:1451.5px;top:389px;font-size:12px;color:#3c3c3c;transform:scaleX(0.948);">Surface</span>
<span class="t" style="left:1547.9px;top:388px;font-size:12px;color:#000000;transform:scaleX(0.883);">5</span>
<span class="t" style="left:1451.5px;top:413px;font-size:12px;color:#3c3c3c;">Geometry type</span>
<span class="t" style="left:1547.9px;top:412px;font-size:12px;color:#000000;transform:scaleX(0.977);">Whole surface</span>
<span class="t" style="left:1591.7px;top:469px;font-size:20.3px;color:#2b2b2b;transform:scaleX(1.037);">Inactive in tension</span>
<span class="t" style="left:1637.2px;top:499px;font-size:20.3px;color:#2b2b2b;transform:scaleX(1.035);">(default)</span>
<span class="t" style="left:1861.2px;top:256px;font-size:12px;color:#3c3c3c;transform:scaleX(1.174);">kip/ft/ft</span>
<span class="t" style="left:1861.2px;top:280px;font-size:12px;color:#3c3c3c;transform:scaleX(1.174);">kip/ft/ft</span>
<span class="t" style="left:1861.2px;top:304px;font-size:12px;color:#3c3c3c;transform:scaleX(1.174);">kip/ft/ft</span>
<span class="t" style="left:1903.1px;top:254px;font-size:7.6px;color:#3c3c3c;transform:scaleX(0.943);">2</span>
<span class="t" style="left:1903.1px;top:278px;font-size:7.6px;color:#3c3c3c;transform:scaleX(0.943);">2</span>
<span class="t" style="left:1903.1px;top:302px;font-size:7.6px;color:#3c3c3c;transform:scaleX(0.943);">2</span>
</div>
</body>
</html>
